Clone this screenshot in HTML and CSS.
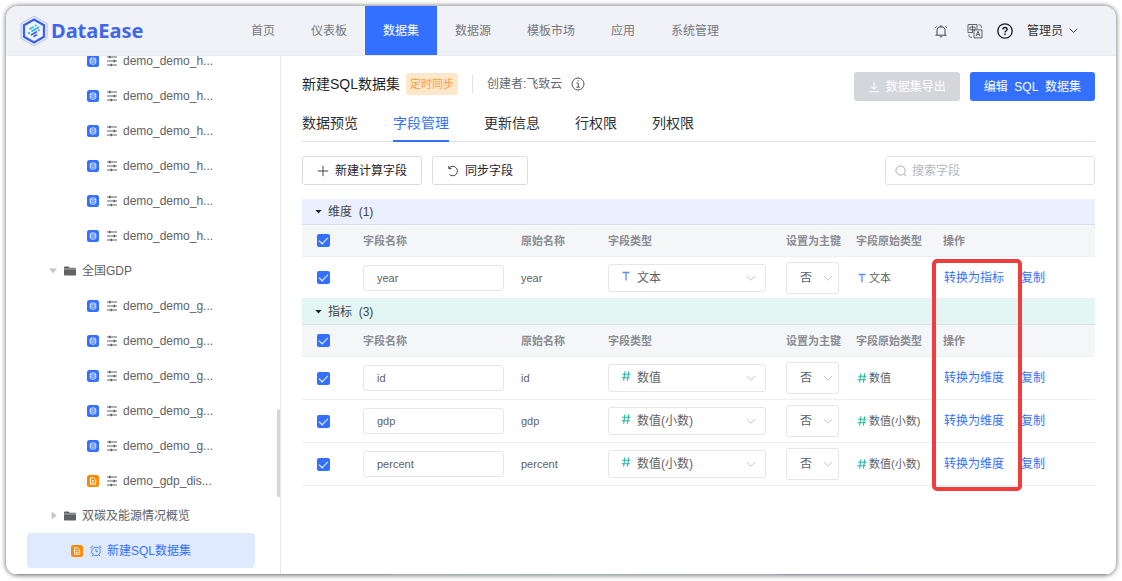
FILE: index.html
```html
<!DOCTYPE html>
<html lang="zh-CN">
<head>
<meta charset="utf-8">
<title>DataEase</title>
<link rel="stylesheet" href="styles.css">
</head>
<body>
<svg class="sprite" aria-hidden="true">
  <symbol id="i-db" viewBox="0 0 12 12"><rect width="12" height="12" rx="2.5" fill="#3370ff"/><g fill="none" stroke="#fff" stroke-width=".8"><ellipse cx="6" cy="4" rx="2.8" ry="1.1"/><path d="M3.2 4v4c0 .7 1.3 1.2 2.8 1.2S8.8 8.700 8.800 8V4M3.200 6c0 .7 1.300 1.200 2.800 1.200S8.800 6.700 8.800 6"/></g></symbol>
  <symbol id="i-doc" viewBox="0 0 12 12"><rect width="12" height="12" rx="2.500" fill="#ff8800"/><path d="M3.500 2.800h3.300l1.900 1.900v4.500H3.500zM4.800 5.600h2.400M4.800 7.400h2.400" fill="none" stroke="#fff"/></symbol>
  <symbol id="i-set" viewBox="0 0 12 12"><path d="M1 2h10M1 6h10M1 10h10" stroke="#606266"/><path d="M3 .8h1.600v2.400H3zM7.500 4.800h1.600v2.400H7.500zM4.500 8.800h1.600v2.400H4.500z" fill="#606266"/></symbol>
  <symbol id="i-folder" viewBox="0 0 12 12"><path d="M0 2.300c0-.4.3-.8.8-.8h3.700l1.200 1.200h5.500c.4 0 .8.300.8.600v.5H0z" fill="#606266"/><path d="M0 4.300h12v5.400c0 .5-.3.800-.8.800H.8c-.5 0-.8-.3-.8-.8z" fill="#606266"/></symbol>
  <symbol id="i-clock" viewBox="0 0 12 12"><g fill="none" stroke="#3370ff" stroke-width=".9"><circle cx="6" cy="6.400" r="4.300"/><path d="M6 4v2.700h2M.7 3.300A4 4 0 0 1 3 .9M11.300 3.300A4 4 0 0 0 9 .9M3 9.800l-1 1.500M9 9.800l1 1.500"/></g></symbol>
  <symbol id="i-down" viewBox="0 0 10 10"><path d="M.8 3 5 7.200 9.200 3" fill="none" stroke="currentColor"/></symbol>
  <symbol id="i-text" viewBox="0 0 10 10"><path d="M1.500 1.500h7M5 1.500V9.500" fill="none" stroke="#5b8bff" stroke-width="1.300"/></symbol>
  <symbol id="i-num" viewBox="0 0 10 10"><path d="M4 .4 2.600 9.600M7.800.4 6.400 9.600M1.200 3.300h8.300M.6 6.700h8.300" fill="none" stroke="#27b9a3" stroke-width="1.100"/></symbol>
</svg>
<div class="window">
  <header class="topbar">
    <a class="brand" href="#">
      <svg width="28" height="32" viewBox="0 0 28 32" fill="none"><path d="M14 1.200 27 8.600v14.800L14 30.800 1 23.400V8.600z" stroke="#9db5f7" stroke-width=".8"/><path d="M14 4.500 24 10.200v11.600L14 27.500 4 21.800V10.200z" stroke="#3c62ea" stroke-width="2.300"/><path d="M9.500 14.200l4.200-2.500M15 11l1.500-.9" stroke="#22c8e8" stroke-width="1.700"/><path d="M8 18.600l2-1.200M11.500 16.600l7.500-4.500" stroke="#22b4f0" stroke-width="1.700"/><path d="M11 20l6-3.600M18.300 15.600l1.200-.7M13.500 21.700l3.500-2.100" stroke="#3c62ea" stroke-width="1.700"/></svg>
      <span class="brand-name">DataEase</span>
    </a>
    <nav class="nav">
      <a href="#">首页</a><a href="#">仪表板</a><a class="active" href="#">数据集</a><a href="#">数据源</a><a href="#">模板市场</a><a href="#">应用</a><a href="#">系统管理</a>
    </nav>
    <div class="tools">
      <button class="icon-btn" aria-label="消息"><svg width="14" height="14" viewBox="0 0 14 14" fill="none" stroke="#40444a"><path d="M3 11V5.500L4.600 3h4.800L11 5.500V11M1.500 11.200h11M5.800 12.800h2.400M7 1v2M1.300 3.800l1.200-1.300M12.700 3.800l-1.200-1.300"/></svg></button>
      <button class="icon-btn" aria-label="语言"><svg width="16" height="16" viewBox="0 0 16 16" fill="none" stroke="#50545a" stroke-width=".9"><path d="M6 9.500H1v-8h9v5M3 4h5v2.800H3zM5.500 2.500v6.500M7 6.900h8v8H7zM9 13.300l2-5 2 5M9.700 11.600h2.600M11.500 2h1.200c1 0 1.600.6 1.600 1.600V5M2 11.500v1.200c0 1 .6 1.600 1.600 1.600H5"/></svg></button>
      <button class="icon-btn" aria-label="帮助"><svg width="16" height="16" viewBox="0 0 16 16" fill="none" stroke="#16181c"><circle cx="8" cy="8" r="7.200" stroke-width="1.300"/><path d="M5.900 6.500c0-1.300.9-2 2.100-2s2.100.8 2.100 1.900c0 1.500-2.100 1.500-2.100 3" stroke-width="1.400"/><path d="M8 10.600v1.500" stroke-width="1.500"/></svg></button>
      <button class="user">管理员<svg width="9" height="9"><use href="#i-down"/></svg></button>
    </div>
  </header>
  <div class="body">
    <aside class="sidebar">
      <ul class="tree">
        <li><a class="leaf" href="#"><svg><use href="#i-db"/></svg><svg><use href="#i-set"/></svg>demo_demo_h...</a></li>
        <li><a class="leaf" href="#"><svg><use href="#i-db"/></svg><svg><use href="#i-set"/></svg>demo_demo_h...</a></li>
        <li><a class="leaf" href="#"><svg><use href="#i-db"/></svg><svg><use href="#i-set"/></svg>demo_demo_h...</a></li>
        <li><a class="leaf" href="#"><svg><use href="#i-db"/></svg><svg><use href="#i-set"/></svg>demo_demo_h...</a></li>
        <li><a class="leaf" href="#"><svg><use href="#i-db"/></svg><svg><use href="#i-set"/></svg>demo_demo_h...</a></li>
        <li><a class="leaf" href="#"><svg><use href="#i-db"/></svg><svg><use href="#i-set"/></svg>demo_demo_h...</a></li>
        <li><a class="folder" href="#"><i class="caret open"></i><svg><use href="#i-folder"/></svg>全国GDP</a></li>
        <li><a class="leaf" href="#"><svg><use href="#i-db"/></svg><svg><use href="#i-set"/></svg>demo_demo_g...</a></li>
        <li><a class="leaf" href="#"><svg><use href="#i-db"/></svg><svg><use href="#i-set"/></svg>demo_demo_g...</a></li>
        <li><a class="leaf" href="#"><svg><use href="#i-db"/></svg><svg><use href="#i-set"/></svg>demo_demo_g...</a></li>
        <li><a class="leaf" href="#"><svg><use href="#i-db"/></svg><svg><use href="#i-set"/></svg>demo_demo_g...</a></li>
        <li><a class="leaf" href="#"><svg><use href="#i-db"/></svg><svg><use href="#i-set"/></svg>demo_demo_g...</a></li>
        <li><a class="leaf" href="#"><svg><use href="#i-doc"/></svg><svg><use href="#i-set"/></svg>demo_gdp_dis...</a></li>
        <li><a class="folder" href="#"><i class="caret"></i><svg><use href="#i-folder"/></svg>双碳及能源情况概览</a></li>
        <li><a class="current" href="#"><svg><use href="#i-doc"/></svg><svg><use href="#i-clock"/></svg>新建SQL数据集</a></li>
      </ul>
      <div class="thumb"></div>
    </aside>
    <main class="main">
      <div class="head">
        <div class="head-info">
          <h1>新建SQL数据集</h1>
          <span class="tag">定时同步</span>
          <span class="creator">创建者:飞致云</span>
          <svg width="14" height="14" viewBox="0 0 14 14" fill="none" stroke="#50545a"><circle cx="7" cy="7" r="6"/><path d="M5.500 6h1.700v4M5.300 10.200h3.600M6.500 3.800h1.200"/></svg>
        </div>
        <div class="head-actions">
          <button class="btn disabled" disabled><svg width="12" height="12" viewBox="0 0 12 12" fill="none" stroke="#fff"><path d="M6 1v7M3 5.200l3 3 3-3M1 10.700h10"/></svg>数据集导出</button>
          <button class="btn primary">编辑&nbsp; SQL&nbsp; 数据集</button>
        </div>
      </div>
      <nav class="tabs">
        <a href="#">数据预览</a><a class="active" href="#">字段管理</a><a href="#">更新信息</a><a href="#">行权限</a><a href="#">列权限</a>
      </nav>
      <div class="toolbar">
        <button class="btn plain"><svg width="12" height="12" viewBox="0 0 12 12" fill="none" stroke="#40444a"><path d="M6 .8v10.400M.8 6h10.400"/></svg>新建计算字段</button>
        <button class="btn plain"><svg width="12" height="12" viewBox="0 0 12 12" fill="none" stroke="#40444a"><path d="M2 3.200A4.700 4.700 0 1 1 2.500 9.500M1.800.9v2.700h2.700"/></svg>同步字段</button>
        <label class="search"><svg width="12" height="12" viewBox="0 0 12 12" fill="none" stroke="#a8abb2"><circle cx="5.500" cy="5.500" r="4.600"/><path d="M9 9l2.300 2.300"/></svg><input type="text" placeholder="搜索字段" aria-label="搜索字段"></label>
      </div>
      <div class="fields">
        <button class="band dim"><i class="fold"></i>维度&nbsp; (1)</button>
        <table class="grid">
          <colgroup><col class="c-check"><col class="c-name"><col class="c-orig"><col class="c-type"><col class="c-key"><col class="c-raw"><col></colgroup>
          <thead><tr><th><input type="checkbox" checked aria-label="全选维度"></th><th>字段名称</th><th>原始名称</th><th>字段类型</th><th>设置为主键</th><th>字段原始类型</th><th>操作</th></tr></thead>
          <tbody>
            <tr><td><input type="checkbox" checked aria-label="year"></td><td><input class="name" type="text" value="year" aria-label="字段名称"></td><td>year</td><td><div class="pick"><svg class="kind"><use href="#i-text"/></svg><select aria-label="字段类型"><option>文本</option></select><svg class="arrow"><use href="#i-down"/></svg></div></td><td><div class="pick key"><select aria-label="设置为主键"><option>否</option></select><svg class="arrow"><use href="#i-down"/></svg></div></td><td><span class="raw"><svg><use href="#i-text"/></svg>文本</span></td><td><span class="ops"><a href="#">转换为指标</a><a href="#">复制</a></span></td></tr>
          </tbody>
        </table>
        <button class="band idx"><i class="fold"></i>指标&nbsp; (3)</button>
        <table class="grid">
          <colgroup><col class="c-check"><col class="c-name"><col class="c-orig"><col class="c-type"><col class="c-key"><col class="c-raw"><col></colgroup>
          <thead><tr><th><input type="checkbox" checked aria-label="全选指标"></th><th>字段名称</th><th>原始名称</th><th>字段类型</th><th>设置为主键</th><th>字段原始类型</th><th>操作</th></tr></thead>
          <tbody>
            <tr><td><input type="checkbox" checked aria-label="id"></td><td><input class="name" type="text" value="id" aria-label="字段名称"></td><td>id</td><td><div class="pick"><svg class="kind"><use href="#i-num"/></svg><select aria-label="字段类型"><option>数值</option></select><svg class="arrow"><use href="#i-down"/></svg></div></td><td><div class="pick key"><select aria-label="设置为主键"><option>否</option></select><svg class="arrow"><use href="#i-down"/></svg></div></td><td><span class="raw"><svg><use href="#i-num"/></svg>数值</span></td><td><span class="ops"><a href="#">转换为维度</a><a href="#">复制</a></span></td></tr>
            <tr><td><input type="checkbox" checked aria-label="gdp"></td><td><input class="name" type="text" value="gdp" aria-label="字段名称"></td><td>gdp</td><td><div class="pick"><svg class="kind"><use href="#i-num"/></svg><select aria-label="字段类型"><option>数值(小数)</option></select><svg class="arrow"><use href="#i-down"/></svg></div></td><td><div class="pick key"><select aria-label="设置为主键"><option>否</option></select><svg class="arrow"><use href="#i-down"/></svg></div></td><td><span class="raw"><svg><use href="#i-num"/></svg>数值(小数)</span></td><td><span class="ops"><a href="#">转换为维度</a><a href="#">复制</a></span></td></tr>
            <tr><td><input type="checkbox" checked aria-label="percent"></td><td><input class="name" type="text" value="percent" aria-label="字段名称"></td><td>percent</td><td><div class="pick"><svg class="kind"><use href="#i-num"/></svg><select aria-label="字段类型"><option>数值(小数)</option></select><svg class="arrow"><use href="#i-down"/></svg></div></td><td><div class="pick key"><select aria-label="设置为主键"><option>否</option></select><svg class="arrow"><use href="#i-down"/></svg></div></td><td><span class="raw"><svg><use href="#i-num"/></svg>数值(小数)</span></td><td><span class="ops"><a href="#">转换为维度</a><a href="#">复制</a></span></td></tr>
          </tbody>
        </table>
        <div class="highlight"></div>
      </div>
    </main>
  </div>
  <div class="edge"></div>
</div>
</body>
</html>
```

FILE: styles.css
```css
* { box-sizing: border-box; }
body {
  margin: 0;
  height: 100vh;
  padding: 6px;
  background: #fff;
  color: #303133;
  font: 12px/18px "Liberation Sans", "Noto Sans CJK SC", sans-serif;
}
button, input, select { font: inherit; color: inherit; margin: 0; }
button { border: 0; background: none; padding: 0; cursor: pointer; }
a { color: inherit; text-decoration: none; }
svg { flex: none; display: block; }
.sprite { position: absolute; width: 0; height: 0; }

.window {
  height: 100%;
  display: flex;
  flex-direction: column;
  overflow: hidden;
  border-radius: 12px;
  box-shadow: 0 0 4px 1px rgba(0, 0, 0, .45);
  background: #fff;
}
.edge { flex: none; height: 1px; background: linear-gradient(90deg, #96999e 34%, #b9a3b5 35%, #9bb5b3 41%, #9db3bd 55%, #b5a3b5 69%, #9a97bb 70%, #96999e 88%); }

/* top bar */
.topbar {
  flex: none;
  height: 50px;
  display: flex;
  align-items: center;
  background: #f1f2f7;
  border-bottom: 1px solid #eaecf0;
}
.brand { display: flex; align-items: center; gap: 3px; width: 227px; padding-left: 14px; }
.brand-name { font: bold 20px/28px "Noto Sans", sans-serif; color: #3f66ee; }
.nav { display: flex; align-self: stretch; color: #75787d; }
.nav a { display: flex; align-items: center; padding: 0 18px; }
.nav .active { background: #3370ff; color: #fff; }
.tools { display: flex; align-items: center; margin-left: auto; padding-right: 38px; gap: 14px; }
.icon-btn:first-child { margin-right: 5px; }
.user { display: flex; align-items: center; gap: 6px; }

.body { flex: 1; min-height: 0; display: flex; }

/* dataset tree */
.sidebar {
  position: relative;
  flex: none;
  width: 275px;
  display: flex;
  flex-direction: column;
  justify-content: flex-end;
  overflow: hidden;
  padding: 0 25px 6px 21px;
  border-right: 1px solid #e6e8eb;
  color: #606266;
}
.tree { list-style: none; margin: 0; padding: 0; }
.tree a { display: flex; align-items: center; height: 35px; border-radius: 4px; }
.tree svg { width: 12px; height: 12px; }
.leaf { padding-left: 60px; }
.leaf svg:first-child { margin-right: 7px; }
.leaf svg + svg { margin-right: 5px; }
.folder { padding-left: 22px; gap: 6px; }
.caret { width: 9px; height: 8px; background: #c0c4cc; clip-path: polygon(30% 0, 85% 50%, 30% 100%); }
.caret.open { clip-path: polygon(0 25%, 90% 25%, 45% 85%); }
.current { padding-left: 44px; background: #e0eaff; color: #3370ff; }
.current svg { margin-right: 7px; }
.current svg + svg { margin-right: 5px; }
.thumb { position: absolute; right: 0; bottom: 77px; width: 3px; height: 88px; border-radius: 2px; background: #d2d5de; }

/* content */
.main { flex: 1; min-width: 0; padding: 16px 21px 0; }
.head { display: flex; justify-content: space-between; align-items: flex-start; }
.head-info { display: flex; align-items: center; height: 24px; color: #646a73; }
.head-info h1 { margin: 0 6px 0 0; font-size: 14px; font-weight: 400; color: #1f2329; }
.tag { padding: 2px 4px; margin-right: 14px; border-radius: 2px; background: #ffe7cc; color: #ff9b38; font-size: 11px; }
.creator { padding-left: 14px; margin-right: 9px; border-left: 1px solid #dfe1e5; }
.head-actions { display: flex; gap: 10px; }
.btn { display: flex; align-items: center; justify-content: center; gap: 6px; height: 29px; padding: 0 14px; border-radius: 3px; white-space: nowrap; }
.primary { background: #3370ff; color: #fff; }
.disabled { background: #d3d6da; color: #fff; }
.plain { border: 1px solid #d9dce0; color: #1f2329; }
.tabs { display: flex; gap: 35px; height: 38px; margin-top: 3px; border-bottom: 1px solid #dcdfe3; font-size: 14px; }
.tabs a { height: 38px; line-height: 38px; }
.tabs .active { color: #3370ff; border-bottom: 2px solid #3370ff; }
.toolbar { display: flex; gap: 10px; margin: 14px 0; }
.search { display: flex; align-items: center; gap: 5px; width: 210px; height: 29px; margin-left: auto; padding: 0 9px; border: 1px solid #dfe1e6; border-radius: 3px; }
.search input { flex: 1; min-width: 0; border: 0; padding: 0; outline: 0; background: none; }
.search input::placeholder { color: #b4b8bf; }

/* field tables */
.fields { position: relative; }
.band { display: flex; align-items: center; gap: 6px; width: 100%; height: 26px; padding-left: 13px; color: #40444a; border-bottom: 1px solid #d9dff2; }
.dim { background: #eaf0ff; }
.idx { background: #e3f6f3; border-color: #d0e4e1; }
.fold { width: 7px; height: 4px; background: #1f2329; clip-path: polygon(0 0, 100% 0, 50% 100%); }
.grid { width: 100%; table-layout: fixed; border-collapse: separate; border-spacing: 0; font-size: 11px; color: #606266; }
.c-check { width: 61px; }
.c-name { width: 158px; }
.c-orig { width: 87px; }
.c-type { width: 178px; }
.c-key { width: 70px; }
.c-raw { width: 87px; }
.grid th, .grid td { padding: 0; text-align: left; vertical-align: middle; border-bottom: 1px solid #ebeef5; white-space: nowrap; }
.grid th { height: 32px; background: #f5f6f7; color: #8a8d93; font-weight: 700; }
.grid td { height: 42px; }
.idx + .grid td { height: 43px; }
.grid th:first-child, .grid td:first-child { padding-left: 15px; }
.grid input[type="checkbox"] { display: block; appearance: none; width: 13px; height: 13px; border-radius: 2px; background: #3370ff; }
.grid input[type="checkbox"]::after { content: ""; display: block; width: 8px; height: 4px; margin: 3px 2px; border: solid #fff; border-width: 0 0 1px 1px; transform: rotate(-45deg); }
.name { display: block; width: 141px; height: 26px; padding: 0 13px; border: 1px solid #e4e6eb; border-radius: 3px; background: #fff; }
.pick { position: relative; width: 158px; }
.pick select { display: block; appearance: none; width: 100%; height: 28px; padding: 0 24px 0 28px; border: 1px solid #e4e6eb; border-radius: 3px; background: #fff; font-size: 12px; }
.kind { position: absolute; left: 13px; top: 7px; width: 10px; height: 10px; }
.arrow { position: absolute; right: 10px; top: 50%; margin-top: -5px; width: 10px; height: 10px; color: #c0c4cc; }
.key { width: 53px; }
.key select { height: 32px; padding: 0 16px 0 13px; }
.key .arrow { right: 6px; }
.raw { display: flex; align-items: center; gap: 2px; padding-left: 1px; }
.raw svg { width: 10px; height: 10px; }
.ops { display: flex; gap: 17px; padding-left: 1px; color: #3370ff; font-size: 12px; }
.highlight { position: absolute; left: 630px; top: 60px; width: 90px; height: 232px; border: 4px solid #f23d3d; border-radius: 5px; pointer-events: none; }
```
